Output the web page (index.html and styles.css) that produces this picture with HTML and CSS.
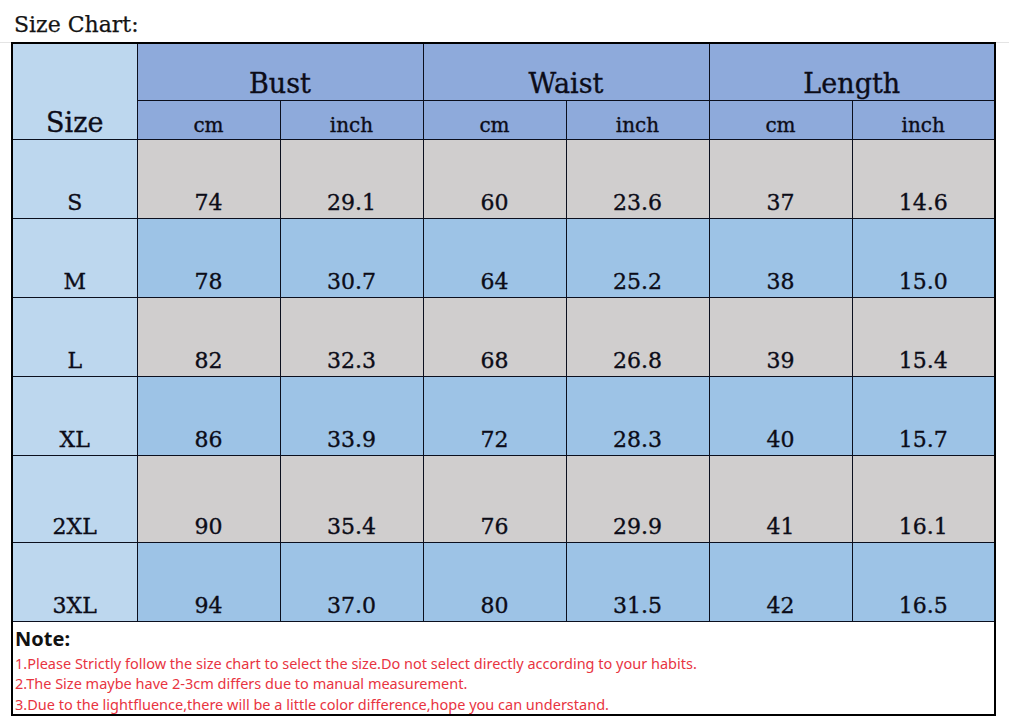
FILE: index.html
```html
<!DOCTYPE html>
<html lang="en">
<head>
<meta charset="utf-8">
<title>Size Chart</title>
<link rel="stylesheet" href="styles.css">
</head>
<body>
<div class="page">
  <div class="title-bar"><h1 class="title">Size Chart:</h1></div>
  <table class="chart">
    <colgroup>
      <col class="c-size">
      <col class="c-val"><col class="c-val"><col class="c-val"><col class="c-val"><col class="c-val"><col class="c-val">
    </colgroup>
    <thead>
      <tr class="h1">
        <th class="size-h" rowspan="2">Size</th>
        <th class="grp" colspan="2">Bust</th>
        <th class="grp" colspan="2">Waist</th>
        <th class="grp" colspan="2">Length</th>
      </tr>
      <tr class="h2">
        <th class="unit">cm</th><th class="unit">inch</th>
        <th class="unit">cm</th><th class="unit">inch</th>
        <th class="unit">cm</th><th class="unit">inch</th>
      </tr>
    </thead>
    <tbody>
      <tr class="row gray"><td class="sz">S</td><td>74</td><td>29.1</td><td>60</td><td>23.6</td><td>37</td><td>14.6</td></tr>
      <tr class="row blue"><td class="sz">M</td><td>78</td><td>30.7</td><td>64</td><td>25.2</td><td>38</td><td>15.0</td></tr>
      <tr class="row gray"><td class="sz">L</td><td>82</td><td>32.3</td><td>68</td><td>26.8</td><td>39</td><td>15.4</td></tr>
      <tr class="row blue"><td class="sz">XL</td><td>86</td><td>33.9</td><td>72</td><td>28.3</td><td>40</td><td>15.7</td></tr>
      <tr class="row gray tall"><td class="sz">2XL</td><td>90</td><td>35.4</td><td>76</td><td>29.9</td><td>41</td><td>16.1</td></tr>
      <tr class="row blue"><td class="sz">3XL</td><td>94</td><td>37.0</td><td>80</td><td>31.5</td><td>42</td><td>16.5</td></tr>
      <tr class="note-row">
        <td class="note" colspan="7">
          <div class="note-title">Note:</div>
          <p class="note-line">1.Please Strictly follow the size chart to select the size.Do not select directly according to your habits.</p>
          <p class="note-line">2.The Size maybe have 2-3cm differs due to manual measurement.</p>
          <p class="note-line">3.Due to the lightfluence,there will be a little color difference,hope you can understand.</p>
        </td>
      </tr>
    </tbody>
  </table>
</div>
</body>
</html>
```

FILE: styles.css
```css
html, body {
  margin: 0;
  padding: 0;
  background: #ffffff;
}

.page {
  width: 1009px;
  height: 720px;
  overflow: hidden;
  font-family: "DejaVu Serif", "Liberation Serif", serif;
  color: #0c0c18;
}

.title-bar {
  height: 43px;
  box-sizing: border-box;
  border-bottom: 1px solid #e4e4e4;
  padding-left: 14px;
}

.title {
  margin: 0;
  padding-top: 12px;
  font-size: 22px;
  font-weight: normal;
  line-height: 26px;
  color: #141414;
  -webkit-text-stroke: 0.25px #141414;
}

.chart {
  margin-left: 11px;
  margin-top: -1px;
  width: 984px;
  border-collapse: collapse;
  table-layout: fixed;
  border: 2px solid #000;
}

.c-size { width: 125px; }
.c-val { width: 143px; }

.chart th,
.chart td {
  border: 1px solid #0b0f1e;
  padding: 0;
  text-align: center;
  vertical-align: bottom;
  font-weight: normal;
  line-height: 24px;
  -webkit-text-stroke: 0.35px #0c0c18;
}

.h1 { height: 57px; }
.h2 { height: 39px; }

.size-h {
  background: #bdd7ee;
  font-size: 27px;
  padding-bottom: 4px !important;
}

.grp {
  background: #8eaadb;
  font-size: 27px;
  padding-bottom: 4px !important;
}

.unit {
  background: #8eaadb;
  font-size: 20px;
  padding-bottom: 2px !important;
}

.row { height: 79px; }
.row.tall { height: 87px; }

.row td {
  font-size: 22px;
  padding-bottom: 3px;
}

.row.gray td { background: #d0cece; }
.row.blue td { background: #9dc3e6; }
.row td.sz { background: #bdd7ee; }

.note-row { height: 92px; }

.chart td.note {
  background: #ffffff;
  text-align: left;
  vertical-align: top;
  padding: 5px 0 0 2px;
  font-family: "Noto Sans", "Open Sans", sans-serif;
  line-height: normal;
  -webkit-text-stroke: 0;
}

.note-title {
  font-size: 20px;
  font-weight: bold;
  color: #111;
  line-height: 24px;
  margin-bottom: 2px;
}

.note-line {
  margin: 0;
  font-size: 14.5px;
  line-height: 20.5px;
  color: #e8343f;
}
```
